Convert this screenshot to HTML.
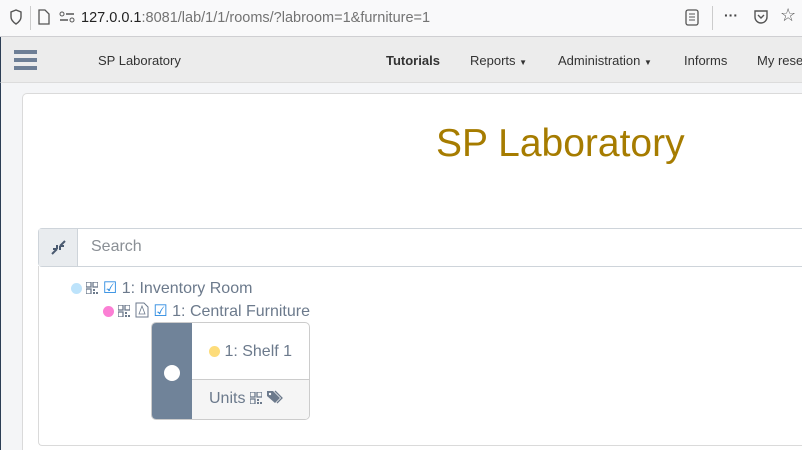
<!DOCTYPE html>
<html><head><meta charset="utf-8"><style>
*{box-sizing:border-box;margin:0;padding:0}
html,body{width:802px;height:450px;overflow:hidden}
body{font-family:"Liberation Sans",sans-serif;background:#f4f5f7;position:relative}
.bar{position:absolute;left:0;top:0;width:802px;height:37px;background:#f9f9fa;border-bottom:1px solid #cfcfd2}
.url{position:absolute;left:81px;top:10px;font-size:14.5px;color:#222;white-space:nowrap}
.url span{color:#737373}
.nav{position:absolute;left:0;top:37px;width:802px;height:46px;background:#ececec;border-bottom:1px solid #dcdcdc;border-left:1px solid #2c3e55}
.nav div{position:absolute;top:16px;font-size:13px;color:#333;white-space:nowrap}
.side{position:absolute;left:0;top:83px;width:1px;height:367px;background:#2c3e55}
.card{position:absolute;left:22px;top:93px;width:780px;height:357px;background:#fff;border:1px solid #dadada;border-bottom:none;border-right:none;border-radius:5px 0 0 0}
.title{position:absolute;left:436px;top:122px;font-size:39px;color:#a67c00}
.sg{position:absolute;left:38px;top:228px;width:764px;height:39px;border:1px solid #ced4da;border-right:none;border-radius:4px 0 0 4px;background:#fff}
.sb{position:absolute;left:0;top:0;width:39px;height:37px;background:#e9ecef;border-right:1px solid #ced4da}
.tree{position:absolute;left:38px;top:266px;width:764px;height:180px;border:1px solid #dadada;border-top:none;border-right:none;border-radius:0 0 0 4px}
.t{position:absolute;font-size:16px;color:#6c7a8c;white-space:nowrap}
.dot{display:inline-block;width:11px;height:11px;border-radius:50%;vertical-align:-1px}
.qr{display:inline-block;width:12px;height:12px;vertical-align:-1px}
.cb{color:#2a8ae0}
.box{position:absolute;left:151px;top:322px;width:159px;height:98px;border:1px solid #ccc;border-radius:5px;overflow:hidden;background:#fff}
</style></head><body>
<div class="bar">
<svg style="position:absolute;left:10px;top:9px" width="12" height="16"><path d="M6 1L1 3v5c0 3 2 5 5 7 3-2 5-4 5-7V3z" fill="none" stroke="#555" stroke-width="1.4"/></svg>
<div style="position:absolute;left:30px;top:6px;width:1px;height:24px;background:#ccc"></div>
<svg style="position:absolute;left:38px;top:9px" width="12" height="16"><path d="M1 1h6l4 4v10H1z" fill="none" stroke="#555" stroke-width="1.3"/></svg>
<svg style="position:absolute;left:59px;top:11px" width="16" height="12"><circle cx="3" cy="3" r="2" fill="none" stroke="#555"/><path d="M7 3h8M1 9h8" stroke="#555" stroke-width="1.5"/><circle cx="13" cy="9" r="2" fill="none" stroke="#555"/></svg>
<div class="url">127.0.0.1<span>:8081/lab/1/1/rooms/?labroom=1&amp;furniture=1</span></div>
<svg style="position:absolute;left:685px;top:9px" width="14" height="17"><rect x="1" y="1" width="12" height="15" rx="2" fill="none" stroke="#555" stroke-width="1.3"/><path d="M4 5h6M4 8h6M4 11h6" stroke="#555"/></svg>
<div style="position:absolute;left:712px;top:6px;width:1px;height:24px;background:#ccc"></div>
<div style="position:absolute;left:724px;top:7px;font-size:14px;color:#444;font-weight:bold">···</div>
<svg style="position:absolute;left:753px;top:9px" width="16" height="16"><path d="M2 2h12v6a6 6 0 0 1-12 0z" fill="none" stroke="#555" stroke-width="1.4"/><path d="M5 6l3 3 3-3" fill="none" stroke="#555" stroke-width="1.4"/></svg>
<div style="position:absolute;left:780px;top:5px;font-size:18px;color:#555">☆</div>
</div>
<div class="nav">
<svg style="position:absolute;left:13px;top:13px" width="23" height="20"><rect y="0" width="23" height="4" fill="#6e7f96"/><rect y="8" width="23" height="4" fill="#6e7f96"/><rect y="16" width="23" height="4" fill="#6e7f96"/></svg>
<div style="left:97px">SP Laboratory</div>
<div style="left:385px;font-weight:bold">Tutorials</div>
<div style="left:469px">Reports <span style="font-size:8px">▼</span></div>
<div style="left:557px">Administration <span style="font-size:8px">▼</span></div>
<div style="left:683px">Informs</div>
<div style="left:756px">My rese</div>
</div>
<div class="side"></div>
<div class="card"></div>
<div class="title">SP Laboratory</div>
<div class="sg"><div class="sb"><svg style="position:absolute;left:12px;top:11px" width="15" height="15"><path d="M1 14L6 9M6 9v-4M6 9h-4M14 1L9 6M9 6v4M9 6h4" stroke="#4a5a70" stroke-width="2"/></svg></div>
<div style="position:absolute;left:52px;top:9px;font-size:16px;color:#8a8f95">Search</div></div>
<div class="tree"></div>
<svg width="0" height="0" style="position:absolute"><defs><g id="q"><rect x="0" y="0" width="5" height="5" fill="none" stroke="#6c7a8c" stroke-width="1.3"/><rect x="7" y="0" width="5" height="5" fill="none" stroke="#6c7a8c" stroke-width="1.3"/><rect x="0" y="7" width="5" height="5" fill="none" stroke="#6c7a8c" stroke-width="1.3"/><rect x="7" y="7" width="2" height="2" fill="#6c7a8c"/><rect x="10" y="10" width="2" height="2" fill="#6c7a8c"/><rect x="7" y="10" width="2" height="2" fill="#6c7a8c"/></g></defs></svg>
<div class="t" style="left:71px;top:278px"><span class="dot" style="background:#bde3fb"></span> <svg class="qr"><use href="#q"/></svg> <span class="cb">☑</span> 1: Inventory Room</div>
<div class="t" style="left:103px;top:301px"><span class="dot" style="background:#fb7fd4"></span> <svg class="qr"><use href="#q"/></svg> <svg width="14" height="16" style="vertical-align:-2px"><path d="M1 1h8l4 4v10H1z" fill="none" stroke="#6c7a8c"/><path d="M4 12l3-8 3 8z" fill="none" stroke="#6c7a8c" stroke-width=".8"/></svg> <span class="cb">☑</span> 1: Central Furniture</div>
<div class="box">
<div style="position:absolute;left:0;top:0;width:40px;height:98px;background:#708399"></div>
<div style="position:absolute;left:12px;top:42px;width:16px;height:16px;border-radius:50%;background:#fff"></div>
<div style="position:absolute;left:40px;top:56px;width:119px;height:42px;background:#f5f5f5;border-top:1px solid #ccc"></div>
<div class="t" style="left:57px;top:20px"><span class="dot" style="background:#fddc7a"></span> 1: Shelf 1</div>
<div class="t" style="left:57px;top:67px">Units <svg class="qr"><use href="#q"/></svg> <svg width="18" height="14" style="vertical-align:-1px"><path d="M1 1h6l7 7-5 5-8-7z" fill="#6c7a8c"/><path d="M9 1l7 7-5 5" fill="none" stroke="#6c7a8c" stroke-width="1.3"/><circle cx="4" cy="4" r="1.2" fill="#fff"/></svg></div>
</div>
</body></html>
